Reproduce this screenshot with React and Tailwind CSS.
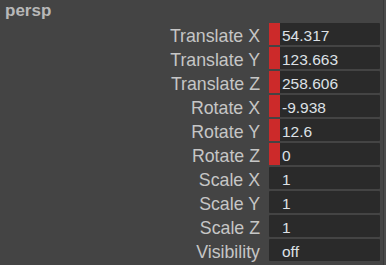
import React from 'react';

const rows = [
  { label: 'Translate X', value: '54.317', keyed: true },
  { label: 'Translate Y', value: '123.663', keyed: true },
  { label: 'Translate Z', value: '258.606', keyed: true },
  { label: 'Rotate X', value: '-9.938', keyed: true },
  { label: 'Rotate Y', value: '12.6', keyed: true },
  { label: 'Rotate Z', value: '0', keyed: true },
  { label: 'Scale X', value: '1' },
  { label: 'Scale Y', value: '1' },
  { label: 'Scale Z', value: '1' },
  { label: 'Visibility', value: 'off' },
];

export default function App() {
  return (
    <div
      className="w-[386px] h-[265px] bg-[#444444] overflow-hidden flex"
      style={{ fontFamily: '"Liberation Sans", Arial, sans-serif' }}
    >
      <div className="flex-1">
        <div className="h-[23px] pt-px pl-[5px] text-[17px] font-bold leading-[19px] text-[#b8b8b8]">
          persp
        </div>
        <div className="flex flex-col gap-[2px]">
          {rows.map((row) => (
            <div key={row.label} className="flex h-[22px] items-start">
              <div className="w-[260px] text-right text-[17.75px] leading-[26px] text-[#c6c6c6] whitespace-nowrap">
                {row.label}
              </div>
              <div className="ml-[9px] w-[111px] h-[22px] flex bg-[#2a2a2a] rounded-[1px]">
                <span className={row.keyed ? 'w-[11px] h-full bg-[#cc2a2a]' : 'w-[11px] h-full'} />
                <span className="pl-[2px] text-[15.5px] leading-[26px] text-[#dde1e6]">
                  {row.value}
                </span>
              </div>
            </div>
          ))}
        </div>
      </div>
      <div className="w-[3px] border-l border-[#383838] bg-[#4b4b4b]" />
    </div>
  );
}
